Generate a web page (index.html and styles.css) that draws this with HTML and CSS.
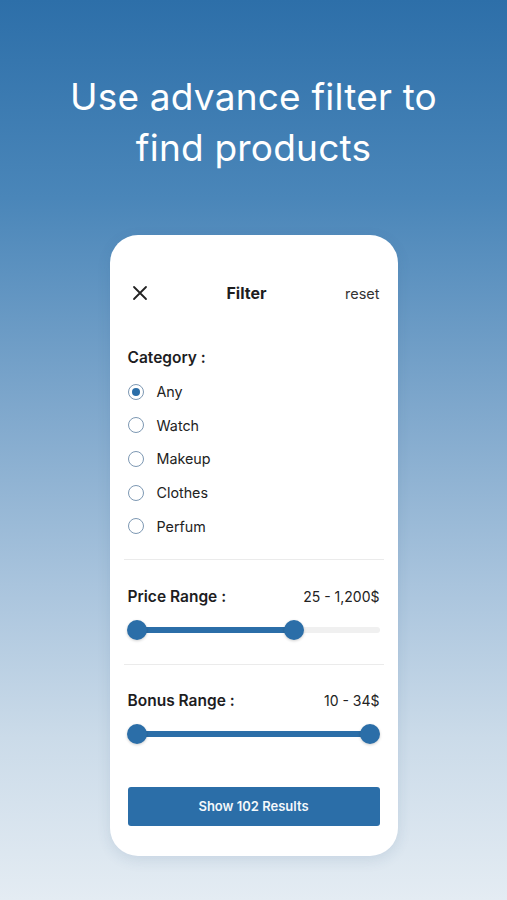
FILE: index.html
```html
<!DOCTYPE html>
<html>
<head>
<meta charset="utf-8">
<link rel="stylesheet" href="styles.css">
</head>
<body>
<div class="screen">
  <h1 class="headline">Use advance filter to<br>find products</h1>
  <div class="card">
    <div class="card-header">
      <svg class="close" width="16" height="16" viewBox="0 0 16 16"><path d="M2 2L14 14M14 2L2 14" stroke="#222" stroke-width="1.8" stroke-linecap="round"/></svg>
      <div class="title">Filter</div>
      <div class="reset">reset</div>
    </div>
    <div class="section category">
      <div class="label">Category :</div>
      <ul class="radios">
        <li class="radio checked"><span class="dot"></span>Any</li>
        <li class="radio"><span class="dot"></span>Watch</li>
        <li class="radio"><span class="dot"></span>Makeup</li>
        <li class="radio"><span class="dot"></span>Clothes</li>
        <li class="radio"><span class="dot"></span>Perfum</li>
      </ul>
    </div>
    <div class="divider"></div>
    <div class="section range">
      <div class="row"><span class="label">Price Range :</span><span class="value">25 - 1,200$</span></div>
      <div class="slider">
        <div class="fill" style="left:0;width:65%"></div>
        <span class="thumb" style="left:0"></span>
        <span class="thumb" style="left:65%"></span>
      </div>
    </div>
    <div class="divider after-range"></div>
    <div class="section range second">
      <div class="row"><span class="label">Bonus Range :</span><span class="value">10 - 34$</span></div>
      <div class="slider">
        <div class="fill" style="left:0;width:96%"></div>
        <span class="thumb" style="left:0"></span>
        <span class="thumb" style="left:96%"></span>
      </div>
    </div>
    <button class="cta">Show 102 Results</button>
  </div>
</div>
</body>
</html>
```

FILE: styles.css
```css
* { box-sizing: border-box; }
html, body { margin: 0; padding: 0; }
body {
  width: 507px;
  height: 900px;
  overflow: hidden;
  font-family: Inter, "Noto Sans", sans-serif;
}
.screen {
  height: 900px;
  background: linear-gradient(180deg, #2d6fa9 0%, #4a86b9 22%, #7ea7cc 45%, #a9c4dd 65%, #cbdbe9 82%, #e4ecf3 100%);
  display: flex;
  flex-direction: column;
  align-items: center;
  padding-top: 71px;
}
.headline {
  margin: 0;
  color: #fff;
  font-weight: 400;
  font-size: 37px;
  line-height: 51px;
  text-align: center;
  letter-spacing: 0.2px;
}
.card {
  margin-top: 62px;
  width: 288px;
  height: 621px;
  background: #fff;
  border-radius: 28px;
  box-shadow: 0 4px 14px rgba(40, 80, 120, 0.12);
  padding: 48px 18px 0 18px;
  display: flex;
  flex-direction: column;
  color: #1d1d1f;
}
.card-header {
  position: relative;
  display: flex;
  align-items: center;
  justify-content: space-between;
  height: 20px;
  padding-left: 4px;
}
.close { display: block; }
.title {
  position: absolute;
  left: 0; right: 0;
  text-align: center;
  font-weight: 700;
  font-size: 16px;
  pointer-events: none;
  padding-right: 14px;
}
.reset {
  font-size: 14.5px;
  color: #333;
}
.label {
  font-weight: 600;
  font-size: 15.5px;
  color: #1d1d1f;
}
.category { margin-top: 45px; }
.category .label { display: block; line-height: 20px; }
.radios {
  list-style: none;
  margin: 14px 0 0 0;
  padding: 0;
  display: flex;
  flex-direction: column;
  gap: 14.7px;
}
.radio {
  display: flex;
  align-items: center;
  height: 19px;
  font-size: 14.3px;
  color: #222;
  gap: 13px;
}
.dot {
  width: 16px;
  height: 16px;
  border-radius: 50%;
  border: 1.5px solid #7d98b3;
  display: inline-flex;
  align-items: center;
  justify-content: center;
  flex: none;
}
.radio.checked .dot::after {
  content: "";
  width: 8px;
  height: 8px;
  border-radius: 50%;
  background: #2b6ea8;
}
.divider {
  height: 1px;
  background: #ebebeb;
  margin: 23px -4px 0 -4px;
}
.divider.after-range { margin-top: 31px; }
.range { padding-top: 27px; }
.range.second { padding-top: 26px; }
.row {
  display: flex;
  justify-content: space-between;
  align-items: center;
  line-height: 20px;
}
.value { font-size: 14px; color: #222; }
.slider {
  position: relative;
  margin: 20px 0 0 9px;
  height: 6px;
  background: #f0f0f0;
  border-radius: 3px;
}
.fill {
  position: absolute;
  top: 0; bottom: 0;
  background: #2b6ea8;
  border-radius: 3px;
}
.thumb {
  position: absolute;
  top: 50%;
  width: 20px;
  height: 20px;
  margin: -10px 0 0 -10px;
  border-radius: 50%;
  background: #2b6ea8;
  box-shadow: 0 1px 3px rgba(0,0,0,0.2);
}
.cta {
  margin-top: 50px;
  height: 39px;
  width: 100%;
  border: none;
  border-radius: 3px;
  background: #2b6ea8;
  color: #f4f8fb;
  font-family: Inter, "Noto Sans", sans-serif;
  font-weight: 600;
  font-size: 13px;
}
```
